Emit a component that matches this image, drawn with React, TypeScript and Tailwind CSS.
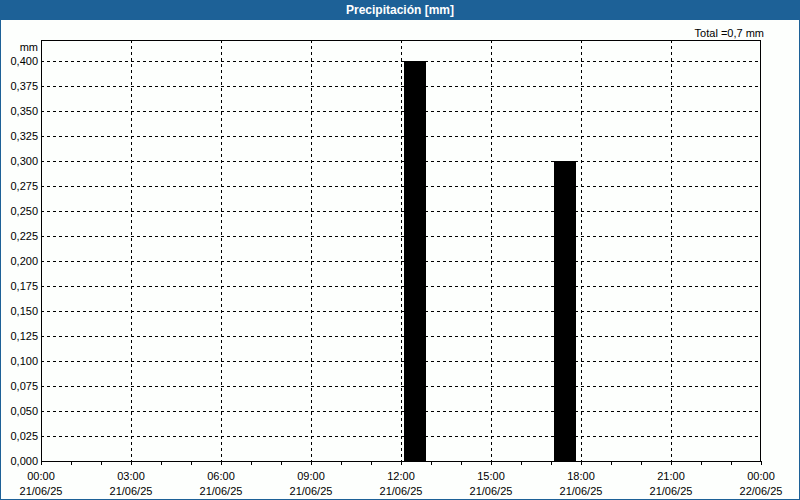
const yTicks = Array.from({ length: 17 }, (_, i) => i * 0.025);
const hours = ["00:00", "03:00", "06:00", "09:00", "12:00", "15:00", "18:00", "21:00", "00:00"];

export default function App() {
  return (
    <div
      className="flex h-[500px] w-[800px] flex-col bg-white"
      style={{ fontFamily: '"Liberation Sans", Arial, sans-serif' }}
    >
      <div className="flex h-[20px] items-center justify-center bg-[#1d6197] text-[12px] font-bold text-white">
        Precipitación [mm]
      </div>
      <div className="flex-1 border-x border-b border-[#1d6197] bg-[#fdfffd]">
        <svg width="798" height="479" className="block text-[11px]">
          <g transform="translate(0,-20)">
            <text x="763" y="37" textAnchor="end" fontSize="11">Total =0,7 mm</text>
            <text x="37" y="51" textAnchor="end" fontSize="11">mm</text>
            {yTicks.map((v, i) => {
              const y = 461 - i * 25;
              return (
                <g key={i}>
                  {i > 0 && (
                    <line x1="40" x2="760" y1={y + 0.5} y2={y + 0.5} stroke="#000" strokeDasharray="3 3" />
                  )}
                  <text x="37" y={y + 4} textAnchor="end" fontSize="11">
                    {v.toFixed(3).replace(".", ",")}
                  </text>
                </g>
              );
            })}
            {hours.map((h, i) => {
              const x = 40 + i * 90;
              return (
                <g key={i}>
                  {i > 0 && i < 8 && (
                    <line x1={x + 0.5} x2={x + 0.5} y1="40" y2="461" stroke="#000" strokeDasharray="3 3" />
                  )}
                  <text x={x} y="480" textAnchor="middle" fontSize="11">{h}</text>
                  <text x={x} y="495" textAnchor="middle" fontSize="11">{i === 8 ? "22/06/25" : "21/06/25"}</text>
                </g>
              );
            })}
            {Array.from({ length: 25 }, (_, i) => (
              <line key={i} x1={40 + i * 30 + 0.5} x2={40 + i * 30 + 0.5} y1="461" y2="465" stroke="#000" />
            ))}
            <rect x="403" y="61" width="22" height="400" fill="#000" />
            <rect x="553" y="161" width="22" height="300" fill="#000" />
            <rect x="40.5" y="40.5" width="719" height="421" fill="none" stroke="#000" />
          </g>
        </svg>
      </div>
    </div>
  );
}
